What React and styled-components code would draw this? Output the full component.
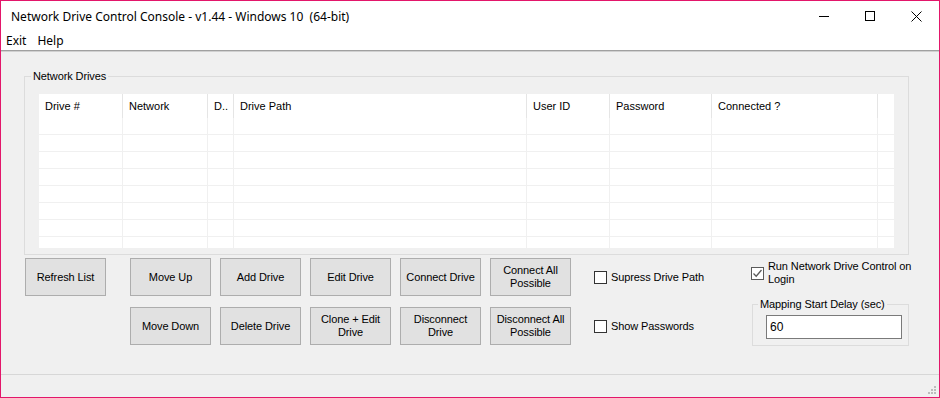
import React from 'react';
import styled, { createGlobalStyle } from 'styled-components';

const GlobalStyle = createGlobalStyle`
  html, body {
    margin: 0;
    padding: 0;
    background: #ffffff;
  }
  body {
    font-family: "Liberation Sans", Arial, sans-serif;
    font-size: 11px;
    color: #000;
  }
  * {
    box-sizing: border-box;
  }
`;

const Window = styled.div`
  width: 940px;
  height: 398px;
  border: 1px solid #e3166a;
  background: #f0f0f0;
  display: flex;
  flex-direction: column;
  overflow: hidden;
`;

const TitleBar = styled.div`
  height: 30px;
  background: #fff;
  display: flex;
  align-items: center;
`;

const Title = styled.div`
  flex: 1;
  padding-left: 10px;
  font-family: "Segoe UI", "Noto Sans", sans-serif;
  font-size: 12px;
  white-space: pre;
`;

const CaptionButton = styled.div`
  width: 46px;
  height: 30px;
  display: flex;
  align-items: center;
  justify-content: center;
`;

const MenuBar = styled.div`
  height: 19px;
  background: #fff;
  display: flex;
  align-items: center;
  padding-left: 5px;
  gap: 11px;
  font-family: "Segoe UI", "Noto Sans", sans-serif;
  font-size: 12px;
`;

const MenuItem = styled.span`
  line-height: 19px;
`;

const Separator = styled.div`
  height: 2px;
  background: linear-gradient(#a0a0a0 50%, #d0d0d0 50%);
`;

const Client = styled.div`
  flex: 1;
  padding: 18px 0 0 23px;
`;

/* legend sits inside the fieldset's left padding, so pull it back to ~7px from the border */
const GroupBox = styled.fieldset`
  margin: 0;
  padding: ${p => p.$pad};
  width: ${p => p.$width}px;
  border: 1px solid #dcdcdc;
  min-inline-size: 0;

  legend {
    margin-left: -8px;
    padding: 0 2px;
    line-height: 13px;
    font-size: 11px;
    white-space: nowrap;
    letter-spacing: -0.1px;
  }
`;

const Table = styled.div`
  width: 855px;
  height: 154px;
  background: #fff;
  overflow: hidden;
`;

const TableRow = styled.div`
  display: grid;
  grid-template-columns: 84px 85px 26px 293px 83px 102px 166px 16px;
  height: ${p => (p.$header ? 24 : 17)}px;
`;

const HeaderCell = styled.div`
  border-right: 1px solid #e5e5e5;
  padding-left: 6px;
  line-height: 24px;
  white-space: nowrap;
  overflow: hidden;

  &:last-child {
    border-right: none;
  }
`;

const Cell = styled.div`
  border-right: 1px solid #f0f0f0;
  border-bottom: 1px solid #f0f0f0;

  &:last-child {
    border-right: none;
  }
`;

const BottomRow = styled.div`
  display: flex;
  margin-top: 3px;
  padding-left: 1px;
`;

const Button = styled.button`
  width: 81px;
  height: 38px;
  margin: 0;
  padding: 0 2px;
  background: #e1e1e1;
  border: 1px solid #adadad;
  font-family: "Liberation Sans", Arial, sans-serif;
  font-size: 11px;
  line-height: 13px;
  letter-spacing: -0.1px;
  white-space: nowrap;
  color: #000;
`;

const ButtonGrid = styled.div`
  display: grid;
  grid-template-columns: repeat(5, 81px);
  grid-auto-rows: 38px;
  column-gap: 9px;
  row-gap: 11px;
  margin-left: 24px;
`;

const CheckColumn = styled.div`
  display: grid;
  grid-template-rows: 38px 38px;
  row-gap: 11px;
  align-items: center;
  width: 157px;
  margin-left: 23px;
`;

const CheckRow = styled.label`
  display: flex;
  align-items: center;
  gap: 4px;
  line-height: 13px;
  white-space: nowrap;
  letter-spacing: -0.1px;
`;

const Box = styled.span`
  width: 13px;
  height: 13px;
  flex: none;
  background: #fff;
  border: 1px solid ${p => (p.$checked ? '#5a5a5a' : '#333')};
  display: flex;
  align-items: center;
  justify-content: center;
`;

const RightColumn = styled.div`
  width: 158px;
  display: flex;
  flex-direction: column;
  padding-top: 2px;
`;

const DelayGroup = styled(GroupBox)`
  margin: 12px 0 0 1px;
`;

const TextBox = styled.div`
  width: 136px;
  height: 24px;
  background: #fff;
  border: 1px solid #7a7a7a;
  padding: 4px 3px 0;
  font-size: 12px;
  line-height: 14px;
`;

const StatusBar = styled.div`
  height: 23px;
  border-top: 1px solid #d7d7d7;
  display: flex;
  justify-content: flex-end;
  align-items: flex-end;
  padding: 0 2px 2px 0;
`;

const columns = ['Drive #', 'Network', 'D..', 'Drive Path', 'User ID', 'Password', 'Connected ?', ''];

const Check = ({ checked, children }) => (
  <CheckRow>
    <Box $checked={checked}>
      {checked && (
        <svg width="11" height="11" viewBox="0 0 11 11">
          <path d="M1.5 5.5 L4.2 8.2 L9.5 2" fill="none" stroke="#5a5a5a" strokeWidth="1.3" />
        </svg>
      )}
    </Box>
    <span>{children}</span>
  </CheckRow>
);

const App = () => {
  return (
    <>
      <GlobalStyle />
      <Window>
        <TitleBar>
          <Title>Network Drive Control Console - v1.44 - Windows 10  (64-bit)</Title>
          <CaptionButton>
            <svg width="10" height="10" viewBox="0 0 10 10">
              <path d="M0 5.5 H10" stroke="#000" strokeWidth="1" />
            </svg>
          </CaptionButton>
          <CaptionButton>
            <svg width="10" height="10" viewBox="0 0 10 10">
              <rect x="0.5" y="0.5" width="9" height="9" fill="none" stroke="#000" strokeWidth="1" />
            </svg>
          </CaptionButton>
          <CaptionButton>
            <svg width="11" height="11" viewBox="0 0 11 11">
              <path d="M0.5 0.5 L10.5 10.5 M10.5 0.5 L0.5 10.5" stroke="#000" strokeWidth="1" />
            </svg>
          </CaptionButton>
        </TitleBar>
        <MenuBar>
          <MenuItem>Exit</MenuItem>
          <MenuItem>Help</MenuItem>
        </MenuBar>
        <Separator />
        <Client>
          <GroupBox $width={885} $pad="11px 13px 6px 14px">
            <legend>Network Drives</legend>
            <Table>
              <TableRow $header>
                {columns.map((c, i) => (
                  <HeaderCell key={i}>{c}</HeaderCell>
                ))}
              </TableRow>
              {Array.from({ length: 8 }).map((_, r) => (
                <TableRow key={r}>
                  {columns.map((c, i) => (
                    <Cell key={i} />
                  ))}
                </TableRow>
              ))}
            </Table>
          </GroupBox>
          <BottomRow>
            <Button>Refresh List</Button>
            <ButtonGrid>
              <Button>Move Up</Button>
              <Button>Add Drive</Button>
              <Button>Edit Drive</Button>
              <Button>Connect Drive</Button>
              <Button>Connect All<br />Possible</Button>
              <Button>Move Down</Button>
              <Button>Delete Drive</Button>
              <Button>Clone + Edit<br />Drive</Button>
              <Button>Disconnect<br />Drive</Button>
              <Button>Disconnect All<br />Possible</Button>
            </ButtonGrid>
            <CheckColumn>
              <Check>Supress Drive Path</Check>
              <Check>Show Passwords</Check>
            </CheckColumn>
            <RightColumn>
              <Check checked>
                Run Network Drive Control on<br />Login
              </Check>
              <DelayGroup $width={157} $pad="4px 6px 6px 13px">
                <legend>Mapping Start Delay (sec)</legend>
                <TextBox>60</TextBox>
              </DelayGroup>
            </RightColumn>
          </BottomRow>
        </Client>
        <StatusBar>
          <svg width="12" height="12" viewBox="0 0 12 12">
            {[[9, 3], [6, 6], [9, 6], [3, 9], [6, 9], [9, 9]].map(([x, y], i) => (
              <rect key={i} x={x} y={y} width="2" height="2" fill="#bcbcbc" />
            ))}
          </svg>
        </StatusBar>
      </Window>
    </>
  );
};

export default App;
